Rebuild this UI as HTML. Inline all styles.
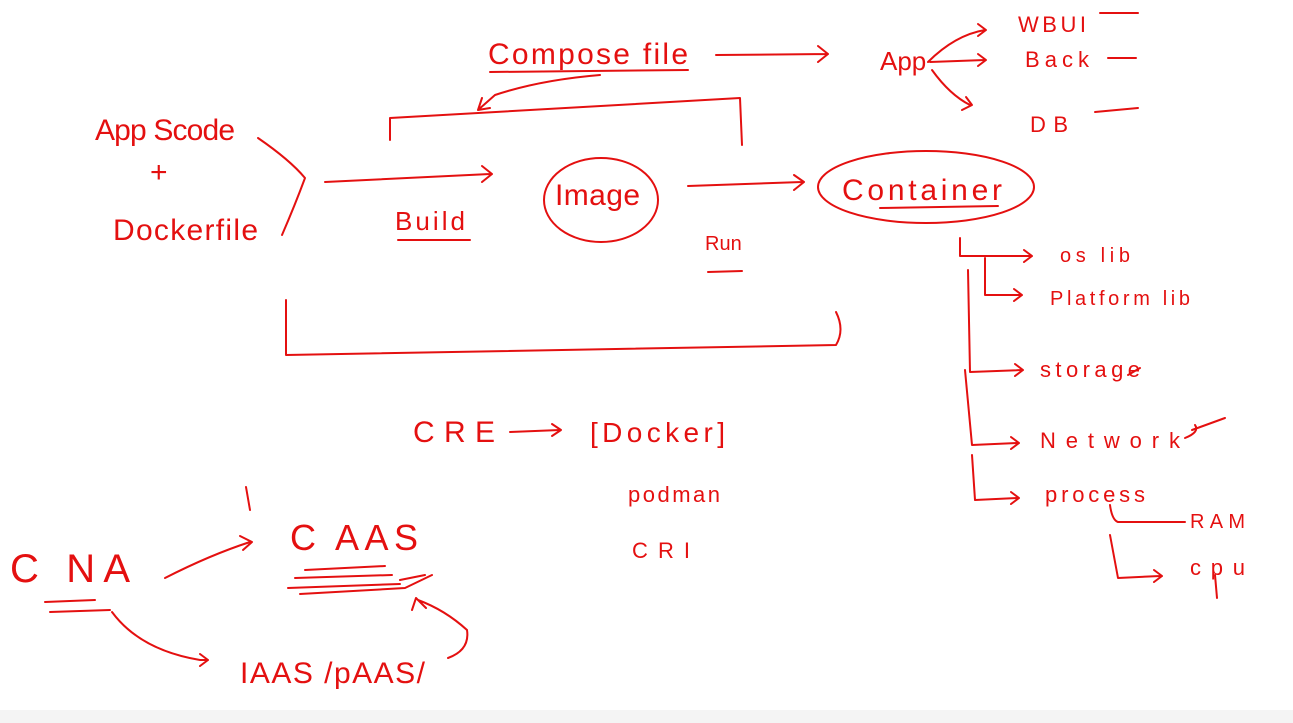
<!DOCTYPE html>
<html><head><meta charset="utf-8"><style>
html,body{margin:0;padding:0;background:#fff;width:1293px;height:723px;overflow:hidden}
svg{display:block}
text{font-family:"Liberation Sans","DejaVu Sans",sans-serif;fill:#e41010;font-weight:normal}
path,ellipse,line{stroke:#e41010;stroke-width:2;fill:none;stroke-linecap:round;stroke-linejoin:round}
</style></head><body>
<svg width="1293" height="723" viewBox="0 0 1293 723">
<rect x="0" y="710" width="1293" height="13" fill="#f4f4f4"/>
<text x="488" y="64" font-size="30" textLength="200">Compose file</text>
<path d="M490 72 L688 70"/>
<path d="M716 55 L828 54 M818 46 L828 54 L818 62"/>
<text x="880" y="70" font-size="26">App</text>
<path d="M928 62 Q955 35 985 30 M978 24 L986 30 L978 36"/>
<path d="M930 62 L985 60 M978 54 L986 60 L978 66"/>
<path d="M932 70 Q950 95 970 105 M962 110 L972 105 L966 97"/>
<text x="1018" y="32" font-size="22" textLength="68">WBUI</text><path d="M1100 13 L1138 13"/>
<text x="1025" y="67" font-size="22" textLength="64">Back</text><path d="M1108 58 L1136 58"/>
<text x="1030" y="132" font-size="22" textLength="38">DB</text><path d="M1095 112 L1138 108"/>
<path d="M600 75 Q540 80 495 95 L478 110 M478 110 L490 108 M478 110 L482 98"/>
<path d="M390 140 L390 118 L740 98 L742 145"/>
<text x="95" y="140" font-size="30" textLength="140">App Scode</text>
<text x="150" y="182" font-size="30">+</text>
<text x="113" y="240" font-size="30" textLength="145">Dockerfile</text>
<path d="M258 138 Q290 160 305 178 Q295 205 282 235"/>
<path d="M325 182 L490 174 M482 166 L492 174 L482 182"/>
<text x="395" y="230" font-size="26" textLength="70">Build</text><path d="M398 240 L470 240"/>
<ellipse cx="601" cy="200" rx="57" ry="42"/>
<text x="555" y="205" font-size="30" textLength="85">Image</text>
<path d="M688 186 L802 182 M794 175 L804 182 L794 190"/>
<text x="705" y="250" font-size="20">Run</text><path d="M708 272 L742 271"/>
<ellipse cx="926" cy="187" rx="108" ry="36"/>
<text x="842" y="200" font-size="30" textLength="160">Container</text><path d="M880 208 L998 206"/>
<path d="M286 300 L286 355 L836 345 Q845 330 836 312"/>
<path d="M960 238 L960 256 L1030 256 M1024 250 L1032 256 L1024 262"/>
<text x="1060" y="262" font-size="20" textLength="70">os lib</text>
<path d="M985 258 L985 295 L1020 295 M1014 289 L1022 295 L1014 301"/>
<text x="1050" y="305" font-size="20" textLength="140">Platform lib</text>
<path d="M968 270 L970 372 L1022 370 M1015 364 L1023 370 L1015 376"/>
<text x="1040" y="377" font-size="22" textLength="100">storage</text><path d="M1128 375 L1140 368"/>
<path d="M965 370 L972 445 L1018 443 M1011 437 L1019 443 L1011 449"/>
<text x="1040" y="448" font-size="22" textLength="140">Network</text><path d="M1185 438 Q1200 432 1195 425 M1192 430 L1225 418"/>
<path d="M972 455 L975 500 L1018 498 M1011 492 L1019 498 L1011 504"/>
<text x="1045" y="502" font-size="22" textLength="100">process</text>
<path d="M1110 505 Q1112 520 1118 522 L1185 522 M1110 535 L1118 578 L1160 576 M1154 570 L1162 576 L1154 582"/>
<text x="1190" y="528" font-size="20" textLength="55">RAM</text>
<text x="1190" y="575" font-size="22" textLength="55">cpu</text>
<path d="M1215 575 L1217 598"/>
<text x="413" y="442" font-size="30" textLength="82">CRE</text>
<path d="M510 432 L560 430 M552 424 L561 430 L552 436"/>
<text x="590" y="442" font-size="28" textLength="135">[Docker]</text>
<text x="628" y="502" font-size="22" textLength="92">podman</text>
<text x="632" y="558" font-size="22" textLength="58">CRI</text>
<path d="M246 487 L250 510"/>
<text x="10" y="582" font-size="40" textLength="120">C NA</text>
<path d="M45 602 L95 600 M50 612 L110 610"/>
<path d="M165 578 Q210 555 250 542 M240 536 L252 542 L243 550"/>
<text x="290" y="550" font-size="36" textLength="128">C AAS</text>
<path d="M305 570 L385 566 M295 578 L392 575 M288 588 L400 584 M300 594 L405 588 M400 580 L425 575 M405 588 L432 575"/>
<path d="M112 612 Q140 650 200 660 L208 660 M200 654 L208 660 L200 666"/>
<text x="240" y="683" font-size="30" textLength="185">IAAS /pAAS/</text>
<path d="M448 658 Q470 650 467 630 Q445 610 418 600 M412 610 L416 598 L426 608"/>
</svg>
</body></html>
